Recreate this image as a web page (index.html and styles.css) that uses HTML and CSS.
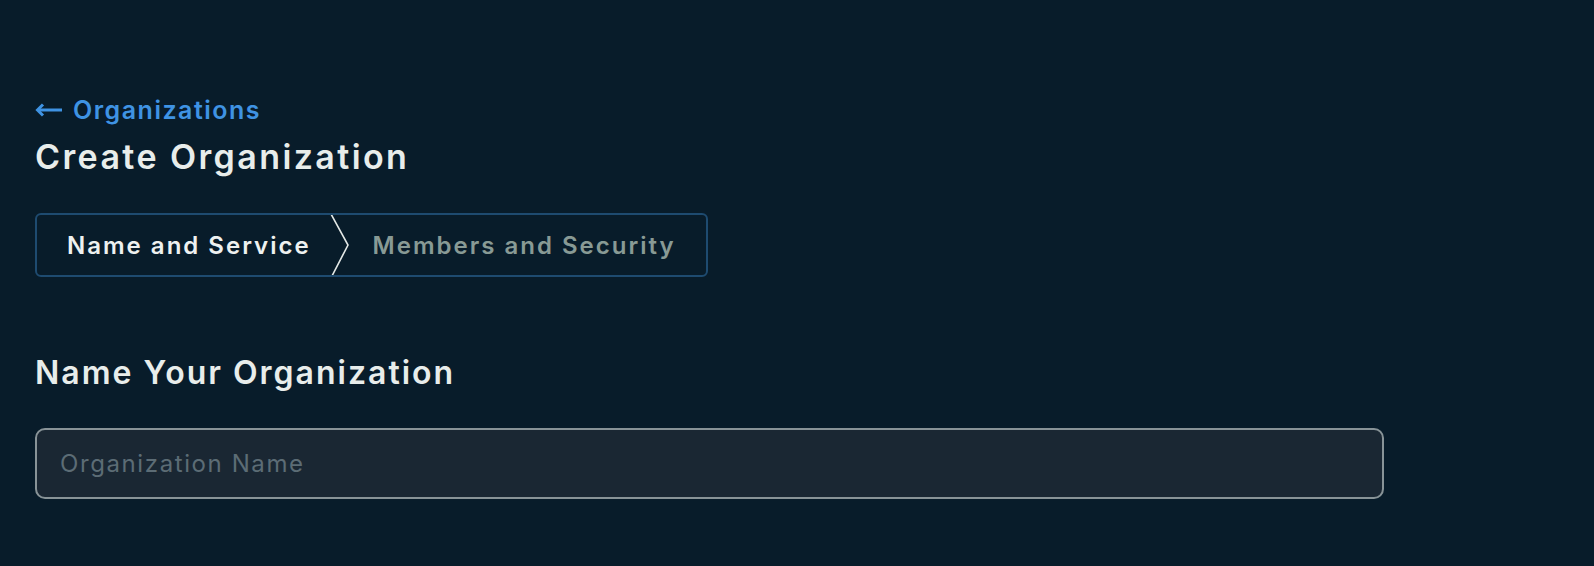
FILE: index.html
```html
<!DOCTYPE html>
<html lang="en">
<head>
<meta charset="utf-8">
<title>Create Organization</title>
<link rel="stylesheet" href="styles.css">
</head>
<body>
<main class="page">
  <a class="back" href="#">
    <svg class="back-icon" width="28" height="14" viewBox="0 0 28 14" aria-hidden="true">
      <path d="M3 7H27" stroke="currentColor" stroke-width="3" fill="none"/>
      <path d="M8 1.5L2.5 7L8 12.5" stroke="currentColor" stroke-width="3" fill="none"/>
    </svg>
    <span>Organizations</span>
  </a>
  <h1 class="title">Create Organization</h1>
  <nav class="stepper">
    <div class="step step-active">Name and Service</div>
    <svg class="chevron" width="22" height="60" viewBox="0 0 22 60" preserveAspectRatio="none" aria-hidden="true">
      <path d="M2 -1L19 30L3 61" stroke="#e3e8e6" stroke-width="1.6" fill="none"/>
    </svg>
    <div class="step step-next">Members and Security</div>
  </nav>
  <h2 class="section">Name Your Organization</h2>
  <input class="name-input" type="text" placeholder="Organization Name">
</main>
</body>
</html>
```
FILE: styles.css
```css
html, body {
  margin: 0;
  padding: 0;
  background: #081c2a;
}
body {
  font-family: Inter, "Noto Sans", sans-serif;
  color: #e8edeb;
}
.page {
  padding: 95px 0 0 35px;
  display: flex;
  flex-direction: column;
  align-items: flex-start;
}
.back {
  display: flex;
  align-items: center;
  gap: 10px;
  color: #3f93e3;
  text-decoration: none;
  font-size: 25px;
  font-weight: 600;
  line-height: 30px;
  letter-spacing: 1.5px;
}
.back-icon {
  display: block;
}
.title {
  margin: 11px 0 0;
  font-size: 34px;
  font-weight: 600;
  line-height: 42px;
  letter-spacing: 2.4px;
  color: #e8edeb;
}
.stepper {
  margin-top: 35px;
  display: flex;
  align-items: stretch;
  height: 60px;
  border: 2px solid #1e4b70;
  border-radius: 6px;
}
.step {
  display: flex;
  align-items: center;
  font-size: 24px;
  font-weight: 600;
  letter-spacing: 2px;
}
.step-active {
  padding: 0 18px 0 30px;
  color: #eef1f0;
}
.step-next {
  padding: 0 30px 0 22px;
  color: #889a95;
}
.chevron {
  display: block;
  height: 60px;
}
.section {
  margin: 75px 0 0;
  font-size: 32px;
  font-weight: 600;
  line-height: 42px;
  letter-spacing: 2px;
  color: #e8edeb;
}
.name-input {
  margin-top: 34px;
  box-sizing: border-box;
  width: 1349px;
  height: 71px;
  padding: 0 23px;
  background: #1a2733;
  border: 2px solid #889397;
  border-radius: 10px;
  font-family: Inter, "Noto Sans", sans-serif;
  font-size: 24px;
  letter-spacing: 1.6px;
  color: #e8edeb;
  outline: none;
}
.name-input::placeholder {
  color: #5c6c75;
}
```
